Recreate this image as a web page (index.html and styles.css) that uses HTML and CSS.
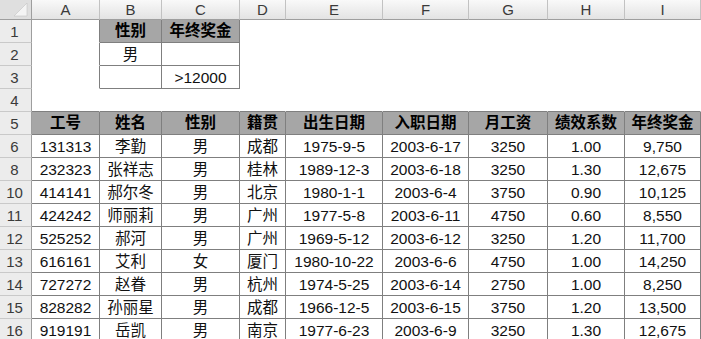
FILE: index.html
```html
<!DOCTYPE html>
<html lang="zh-CN">
<head>
<meta charset="utf-8">
<title>Sheet</title>
<link rel="stylesheet" href="styles.css">
</head>
<body>
<div class="sheet">
  <div class="corner"><svg width="31" height="19" viewBox="0 0 31 19"><polygon points="27,3 27,16 14,16" fill="#f4f4f4" stroke="#c4c4c4" stroke-width="0.6"/></svg></div>
  <div class="ch">A</div><div class="ch">B</div><div class="ch">C</div><div class="ch">D</div><div class="ch">E</div><div class="ch">F</div><div class="ch">G</div><div class="ch">H</div><div class="ch last">I</div>

  <div class="rh">1</div><div class="c edge"></div><div class="c t h">性别</div><div class="c t h">年终奖金</div><div class="c"></div><div class="c"></div><div class="c"></div><div class="c"></div><div class="c"></div><div class="c"></div>
  <div class="rh">2</div><div class="c edge"></div><div class="c t">男</div><div class="c t"></div><div class="c"></div><div class="c"></div><div class="c"></div><div class="c"></div><div class="c"></div><div class="c"></div>
  <div class="rh">3</div><div class="c edge"></div><div class="c t"></div><div class="c t">&gt;12000</div><div class="c"></div><div class="c"></div><div class="c"></div><div class="c"></div><div class="c"></div><div class="c"></div>
  <div class="rh">4</div><div class="c under"></div><div class="c under"></div><div class="c under"></div><div class="c under"></div><div class="c under"></div><div class="c under"></div><div class="c under"></div><div class="c under"></div><div class="c under"></div>

  <div class="rh">5</div><div class="c t h">工号</div><div class="c t h">姓名</div><div class="c t h">性别</div><div class="c t h">籍贯</div><div class="c t h">出生日期</div><div class="c t h">入职日期</div><div class="c t h">月工资</div><div class="c t h">绩效系数</div><div class="c t h">年终奖金</div>

  <div class="rh">6</div><div class="c t">131313</div><div class="c t">李勤</div><div class="c t">男</div><div class="c t">成都</div><div class="c t">1975-9-5</div><div class="c t">2003-6-17</div><div class="c t">3250</div><div class="c t">1.00</div><div class="c t">9,750</div>
  <div class="rh">8</div><div class="c t">232323</div><div class="c t">张祥志</div><div class="c t">男</div><div class="c t">桂林</div><div class="c t">1989-12-3</div><div class="c t">2003-6-18</div><div class="c t">3250</div><div class="c t">1.30</div><div class="c t">12,675</div>
  <div class="rh">10</div><div class="c t">414141</div><div class="c t">郝尔冬</div><div class="c t">男</div><div class="c t">北京</div><div class="c t">1980-1-1</div><div class="c t">2003-6-4</div><div class="c t">3750</div><div class="c t">0.90</div><div class="c t">10,125</div>
  <div class="rh">11</div><div class="c t">424242</div><div class="c t">师丽莉</div><div class="c t">男</div><div class="c t">广州</div><div class="c t">1977-5-8</div><div class="c t">2003-6-11</div><div class="c t">4750</div><div class="c t">0.60</div><div class="c t">8,550</div>
  <div class="rh">12</div><div class="c t">525252</div><div class="c t">郝河</div><div class="c t">男</div><div class="c t">广州</div><div class="c t">1969-5-12</div><div class="c t">2003-6-12</div><div class="c t">3250</div><div class="c t">1.20</div><div class="c t">11,700</div>
  <div class="rh">13</div><div class="c t">616161</div><div class="c t">艾利</div><div class="c t">女</div><div class="c t">厦门</div><div class="c t">1980-10-22</div><div class="c t">2003-6-6</div><div class="c t">4750</div><div class="c t">1.00</div><div class="c t">14,250</div>
  <div class="rh">14</div><div class="c t">727272</div><div class="c t">赵眷</div><div class="c t">男</div><div class="c t">杭州</div><div class="c t">1974-5-25</div><div class="c t">2003-6-14</div><div class="c t">2750</div><div class="c t">1.00</div><div class="c t">8,250</div>
  <div class="rh">15</div><div class="c t">828282</div><div class="c t">孙丽星</div><div class="c t">男</div><div class="c t">成都</div><div class="c t">1966-12-5</div><div class="c t">2003-6-15</div><div class="c t">3750</div><div class="c t">1.20</div><div class="c t">13,500</div>
  <div class="rh">16</div><div class="c t">919191</div><div class="c t">岳凯</div><div class="c t">男</div><div class="c t">南京</div><div class="c t">1977-6-23</div><div class="c t">2003-6-9</div><div class="c t">3250</div><div class="c t">1.30</div><div class="c t">12,675</div>
</div>
</body>
</html>
```
FILE: styles.css
```css
html, body {
  margin: 0;
  padding: 0;
  background: #ffffff;
  overflow: hidden;
}

.sheet {
  display: grid;
  grid-template-columns: 32px 68px 62px 78px 46px 97px 86px 79px 77px 76px;
  grid-template-rows: 20px;
  grid-auto-rows: 23px;
  font-family: "Liberation Sans", "Noto Sans CJK SC", sans-serif;
}

.sheet > div {
  box-sizing: border-box;
  overflow: hidden;
  white-space: nowrap;
}

.corner {
  background: #dfdfdf;
  border-right: 1px solid #9e9e9e;
  border-bottom: 1px solid #9e9e9e;
}

.corner svg {
  display: block;
}

.ch {
  background: linear-gradient(#f9f9f9, #e3e3e3);
  border-right: 1px solid #c2c2c2;
  border-bottom: 1px solid #9e9e9e;
  text-align: center;
  font-size: 15px;
  line-height: 19px;
  color: #3a3a3a;
}

.rh {
  background: #ececec;
  border-right: 1px solid #9e9e9e;
  border-bottom: 1px solid #c9c9c9;
  text-align: center;
  font-size: 15px;
  line-height: 18px;
  padding-top: 3px;
  padding-right: 2px;
  color: #3a3a3a;
}

.c {
  background: #ffffff;
  border-right: 1px solid #ffffff;
  border-bottom: 1px solid #ffffff;
  text-align: center;
  font-size: 15.5px;
  line-height: 18px;
  padding-top: 3px;
  color: #111111;
}

.c.edge {
  border-right-color: #7f7f7f;
}

.c.under {
  border-bottom-color: #7f7f7f;
}

.c.t {
  border-right-color: #7f7f7f;
  border-bottom-color: #7f7f7f;
}

.c.h {
  background: #a6a6a6;
  font-weight: bold;
  color: #000000;
  padding-top: 2px;
}
```
